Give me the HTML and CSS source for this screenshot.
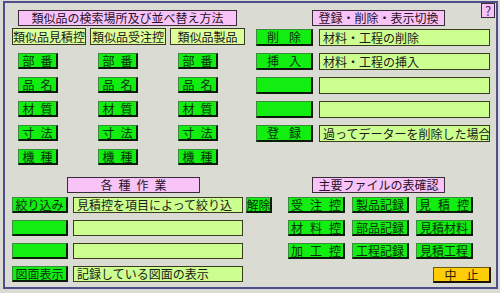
FILE: index.html
```html
<!DOCTYPE html>
<html lang="ja">
<head>
    <meta charset="UTF-8">
    <meta name="viewport" content="width=device-width, initial-scale=1.0">
    <link rel="stylesheet" href="styles.css">
    <title>類似品検索</title>
</head>
<body>
    <div class="frame">
        <div class="top">
            <section class="search">
                <div class="title t-search">類似品の検索場所及び並べ替え方法</div>
                <div class="heads">
                    <div class="head w74">類似品見積控</div>
                    <div class="head w76">類似品受注控</div>
                    <div class="head w75">類似品製品</div>
                </div>
                <div class="btn-grid">
                    <div class="btn sp2">部番</div>
                    <div class="btn sp2">部番</div>
                    <div class="btn sp2">部番</div>
                    <div class="btn sp2">品名</div>
                    <div class="btn sp2">品名</div>
                    <div class="btn sp2">品名</div>
                    <div class="btn sp2">材質</div>
                    <div class="btn sp2">材質</div>
                    <div class="btn sp2">材質</div>
                    <div class="btn sp2">寸法</div>
                    <div class="btn sp2">寸法</div>
                    <div class="btn sp2">寸法</div>
                    <div class="btn sp2">機種</div>
                    <div class="btn sp2">機種</div>
                    <div class="btn sp2">機種</div>
                </div>
            </section>

            <section class="edit">
                <div class="edit-head">
                    <div class="title t-edit">登録・削除・表示切換</div>
                    <div class="help">?</div>
                </div>
                <div class="rows edit-rows">
                    <div class="row">
                        <div class="btn wide sp3">削除</div>
                        <div class="box w171">材料・工程の削除</div>
                    </div>
                    <div class="row">
                        <div class="btn wide sp3">挿入</div>
                        <div class="box w171">材料・工程の挿入</div>
                    </div>
                    <div class="row">
                        <div class="btn wide"></div>
                        <div class="box w171"></div>
                    </div>
                    <div class="row">
                        <div class="btn wide"></div>
                        <div class="box w171"></div>
                    </div>
                    <div class="row">
                        <div class="btn wide sp3">登録</div>
                        <div class="box w171">過ってデーターを削除した場合</div>
                    </div>
                </div>
            </section>
        </div>

        <div class="bottom">
            <section class="work">
                <div class="title t-work sp4">各種作業</div>
                <div class="rows work-rows">
                    <div class="row">
                        <div class="btn w56">絞り込み</div>
                        <div class="box w170">見積控を項目によって絞り込</div>
                        <div class="btn small">解除</div>
                    </div>
                    <div class="row">
                        <div class="btn w56"></div>
                        <div class="box w170"></div>
                    </div>
                    <div class="row">
                        <div class="btn w56"></div>
                        <div class="box w170"></div>
                    </div>
                    <div class="row">
                        <div class="btn w56">図面表示</div>
                        <div class="box w170">記録している図面の表示</div>
                    </div>
                </div>
            </section>

            <section class="files">
                <div class="title t-files">主要ファイルの表確認</div>
                <div class="file-grid">
                    <div class="btn sp1">受注控</div>
                    <div class="btn">製品記録</div>
                    <div class="btn sp1">見積控</div>
                    <div class="btn sp1">材料控</div>
                    <div class="btn">部品記録</div>
                    <div class="btn">見積材料</div>
                    <div class="btn sp1">加工控</div>
                    <div class="btn">工程記録</div>
                    <div class="btn">見積工程</div>
                </div>
                <div class="btn stop sp3">中止</div>
            </section>
        </div>
    </div>
</body>
</html>
```

FILE: styles.css
```css
body {
    margin: 0;
    background-color: #dadcd4;
    font-family: "Noto Sans CJK JP", "Noto Sans", sans-serif;
    font-size: 12px;
    color: #1a1a1a;
}

.frame {
    width: 495px;
    height: 288px;
    margin: 1px 0 0 3px;
    border: 2px solid #4e4e8c;
    box-sizing: border-box;
}

.top {
    display: flex;
    height: 169px;
}

.bottom {
    display: flex;
}

/* shared boxes */
.title, .head, .box, .btn, .help {
    box-sizing: border-box;
    display: flex;
    align-items: center;
    white-space: nowrap;
    line-height: 1;
}

.title {
    height: 16px;
    justify-content: center;
    background-color: #f8c4f8;
    border: 1px solid #3a2a3a;
    color: #2a102a;
}

.head {
    height: 17px;
    justify-content: center;
    background-color: #dcff9c;
    border: 1px solid #3a3a20;
}

.box {
    height: 100%;
    padding-left: 3px;
    background-color: #ccff90;
    border: 1px solid #3a3a20;
}

.btn {
    height: 16px;
    justify-content: center;
    background-color: #12ee12;
    border: 1px solid #3c8a3c;
    border-right: 2px solid #0c1a0c;
    border-bottom: 2px solid #0c1a0c;
    color: #0a300a;
}

/* letter spacing on button labels */
.sp1 { letter-spacing: 7px; padding-left: 7px; }
.sp2 { letter-spacing: 6px; padding-left: 6px; }
.sp3 { letter-spacing: 10px; padding-left: 10px; }
.sp4 { letter-spacing: 6px; padding-left: 6px; }

.w56 { width: 56px; }
.w74 { width: 74px; }
.w75 { width: 75px; }
.w76 { width: 76px; }
.w170 { width: 170px; }
.w171 { width: 171px; }

/* search section */
.search {
    width: 245px;
    padding-top: 7px;
}

.t-search {
    width: 219px;
    margin-left: 13px;
}

.heads {
    display: flex;
    gap: 4px;
    margin: 2px 0 0 7px;
}

.btn-grid {
    display: grid;
    grid-template-columns: repeat(3, 40px);
    grid-auto-rows: 16px;
    column-gap: 40px;
    row-gap: 8px;
    margin: 8px 0 0 13px;
}

/* edit section */
.edit {
    flex: 1;
}

.edit-head {
    display: flex;
    align-items: flex-start;
}

.t-edit {
    width: 133px;
    margin: 7px 0 0 62px;
}

.help {
    width: 14px;
    height: 15px;
    margin-left: auto;
    margin-right: 1px;
    justify-content: center;
    background-color: #f8c4f8;
    border: 1px solid #3a2a3a;
    color: #502060;
    font-size: 13px;
}

.rows {
    display: flex;
    flex-direction: column;
    gap: 7px;
}

.row {
    display: flex;
}

.edit-rows {
    margin: 3px 0 0 6px;
}

.edit-rows .row {
    height: 17px;
    gap: 6px;
}

.edit-rows .btn {
    height: 17px;
}

.btn.wide {
    width: 57px;
}

/* work section */
.work {
    width: 280px;
    padding-top: 5px;
}

.t-work {
    width: 133px;
    margin-left: 62px;
}

.work-rows {
    margin: 4px 0 0 7px;
}

.work-rows .row {
    height: 16px;
    gap: 5px;
}

.btn.small {
    width: 26px;
    margin-left: -2px;
}

/* files section */
.files {
    flex: 1;
    padding-top: 5px;
}

.t-files {
    width: 133px;
    margin-left: 27px;
}

.file-grid {
    display: grid;
    grid-template-columns: repeat(3, 57px);
    grid-auto-rows: 16px;
    gap: 7px;
    margin: 4px 0 0 3px;
}

.btn.stop {
    width: 58px;
    margin: 8px 0 0 148px;
    background-color: #ffcc08;
    border-color: #6a5a10;
    border-right-color: #1a1408;
    border-bottom-color: #1a1408;
    color: #2a1a00;
}
```
